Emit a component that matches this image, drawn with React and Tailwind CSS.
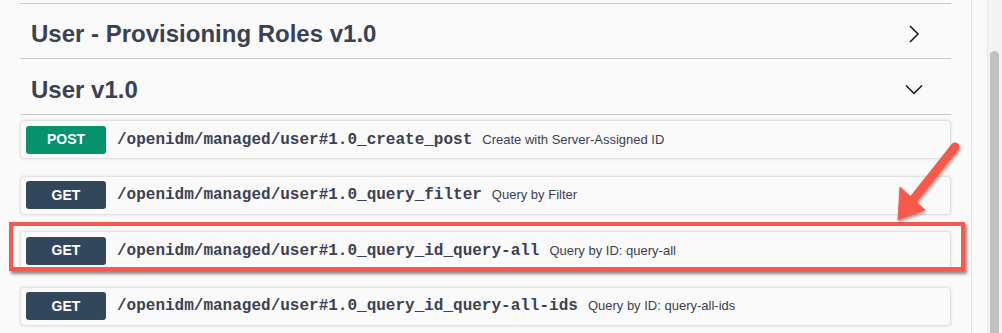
import React from 'react';

const ops = [
  { method: 'POST', path: '/openidm/managed/user#1.0_create_post', summary: 'Create with Server-Assigned ID' },
  { method: 'GET', path: '/openidm/managed/user#1.0_query_filter', summary: 'Query by Filter' },
  { method: 'GET', path: '/openidm/managed/user#1.0_query_id_query-all', summary: 'Query by ID: query-all', highlight: true },
  { method: 'GET', path: '/openidm/managed/user#1.0_query_id_query-all-ids', summary: 'Query by ID: query-all-ids' },
];

const ChevronRight = () => (
  <svg width="12" height="18" viewBox="0 0 12 18" fill="none" stroke="#111" strokeWidth="1.5">
    <path d="M2 1 L10 9 L2 17" />
  </svg>
);

const ChevronDown = () => (
  <svg width="18" height="11" viewBox="0 0 18 11" fill="none" stroke="#111" strokeWidth="1.5">
    <path d="M1 1.5 L9 9.5 L17 1.5" />
  </svg>
);

const OpRow = ({ op }) => (
  <div className="flex h-[39px] items-center rounded-[4px] border border-[#e3e3e3] bg-[#fafafa] px-[5px] shadow-[0_0_3px_rgba(0,0,0,0.12)]">
    <span
      className={`flex h-[28px] w-[80px] shrink-0 items-center justify-center rounded-[3px] text-[14px] font-bold text-white ${
        op.method === 'POST' ? 'bg-[#05936d]' : 'bg-[#33475c]'
      }`}
    >
      {op.method}
    </span>
    <span className="ml-[11px] font-['Liberation_Mono',monospace] text-[16px] font-bold text-[#3b4151]">
      {op.path}
    </span>
    <span className="ml-[10px] text-[13px] text-[#3b4151]">{op.summary}</span>
  </div>
);

export default function App() {
  return (
    <div className="relative flex h-[333px] w-[1002px] overflow-hidden bg-[#fafafa] font-['Liberation_Sans',Arial,sans-serif]">
      <div className="w-[972px] border-r border-[#e6e6e6] pl-[20px] pr-[20px]">
        <div className="mt-[3px] border-t border-[#c9c9c9]">
          <div className="flex h-[55px] items-center justify-between border-b border-[#c9c9c9] pl-[11px] pr-[31px] pt-[6px]">
            <h3 className="text-[24px] font-bold text-[#3b4151]">User - Provisioning Roles v1.0</h3>
            <ChevronRight />
          </div>
          <div className="flex h-[56px] items-center justify-between border-b border-[#c9c9c9] pl-[11px] pr-[28px] pt-[6px]">
            <h3 className="text-[24px] font-bold text-[#3b4151]">User v1.0</h3>
            <ChevronDown />
          </div>
        </div>
        <div className="flex flex-col gap-[16.5px] pt-[5px]">
          {ops.map((op) => (
            <OpRow key={op.path} op={op} />
          ))}
        </div>
      </div>
      <div className="w-[15px] ml-[15px] border-l border-[#e8e8e8] bg-[#f3f3f3] pt-[51px]">
        <div className="ml-[2px] h-full w-[9px] rounded-t-full bg-[#c1c1c1]" />
      </div>

      {/* annotation: highlight frame */}
      <div className="pointer-events-none absolute left-[9px] top-[222px] h-[49px] w-[956px] border-[4px] border-[#f55a4e] shadow-[2px_3px_3px_rgba(0,0,0,0.45)]" />

      {/* annotation: arrow */}
      <svg className="pointer-events-none absolute left-[880px] top-[130px]" width="100" height="100" viewBox="0 0 100 100">
        <defs>
          <filter id="sh" x="-20%" y="-20%" width="140%" height="140%">
            <feDropShadow dx="1" dy="2" stdDeviation="1.5" floodColor="#000" floodOpacity="0.35" />
          </filter>
        </defs>
        <g filter="url(#sh)" fill="#f55a4e" stroke="#f55a4e">
          <line x1="75" y1="17" x2="33" y2="70" strokeWidth="9" strokeLinecap="round" />
          <path d="M18 90 L20 57 L45 80 Z" strokeWidth="1" strokeLinejoin="round" />
        </g>
      </svg>
    </div>
  );
}
